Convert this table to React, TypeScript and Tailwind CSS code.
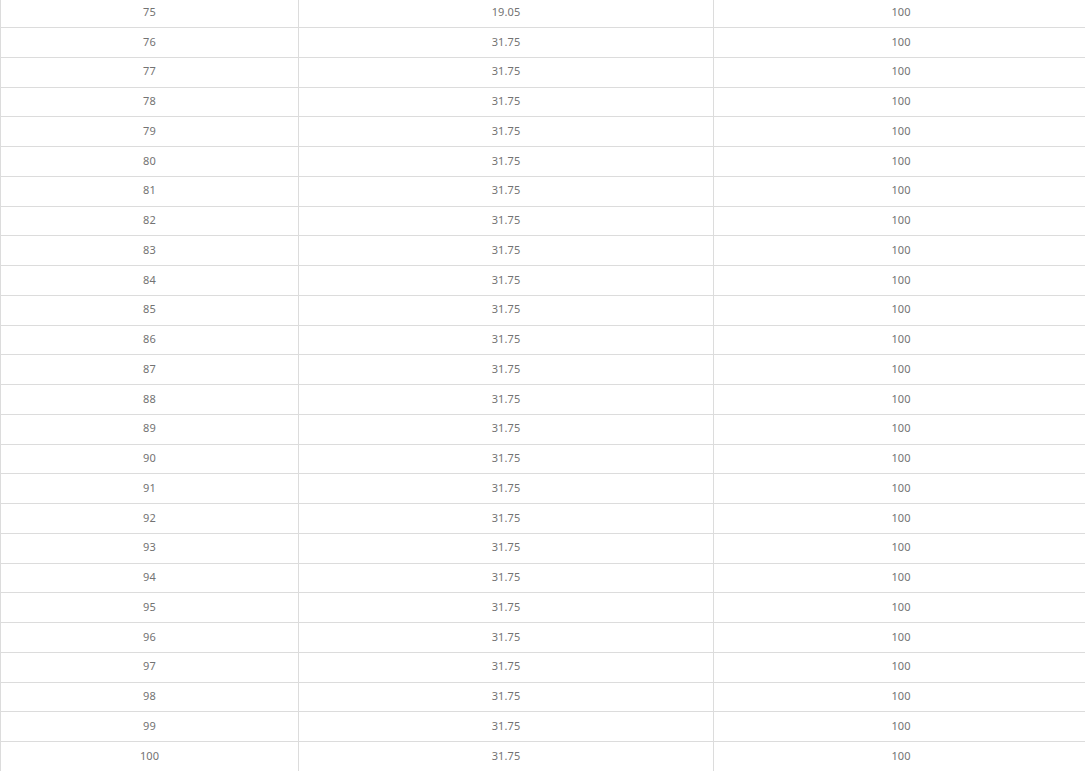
const rows = Array.from({ length: 26 }, (_, i) => {
  const n = 75 + i;
  return { id: n, value: n === 75 ? '19.05' : '31.75', total: '100' };
});

export default function App() {
  return (
    <div className="w-[1085px] h-[771px] overflow-hidden bg-white">
      <div
        className="-mt-[1.75px] w-[1088px] text-[11px] text-[#737373] tracking-[0.1px]"
        style={{ fontFamily: '"Noto Sans", "Liberation Sans", sans-serif' }}
      >
        {rows.map((row) => (
          <div key={row.id} className="flex h-[29.75px] border-b border-[#dcdcdc]">
            <div className="w-[299px] shrink-0 flex items-center justify-center pb-[1px] border-l border-r border-[#dcdcdc]">
              {row.id}
            </div>
            <div className="w-[415px] shrink-0 flex items-center justify-center pb-[1px] border-r border-[#dcdcdc]">
              {row.value}
            </div>
            <div className="w-[374px] shrink-0 flex items-center justify-center pb-[1px]">
              {row.total}
            </div>
          </div>
        ))}
      </div>
    </div>
  );
}
